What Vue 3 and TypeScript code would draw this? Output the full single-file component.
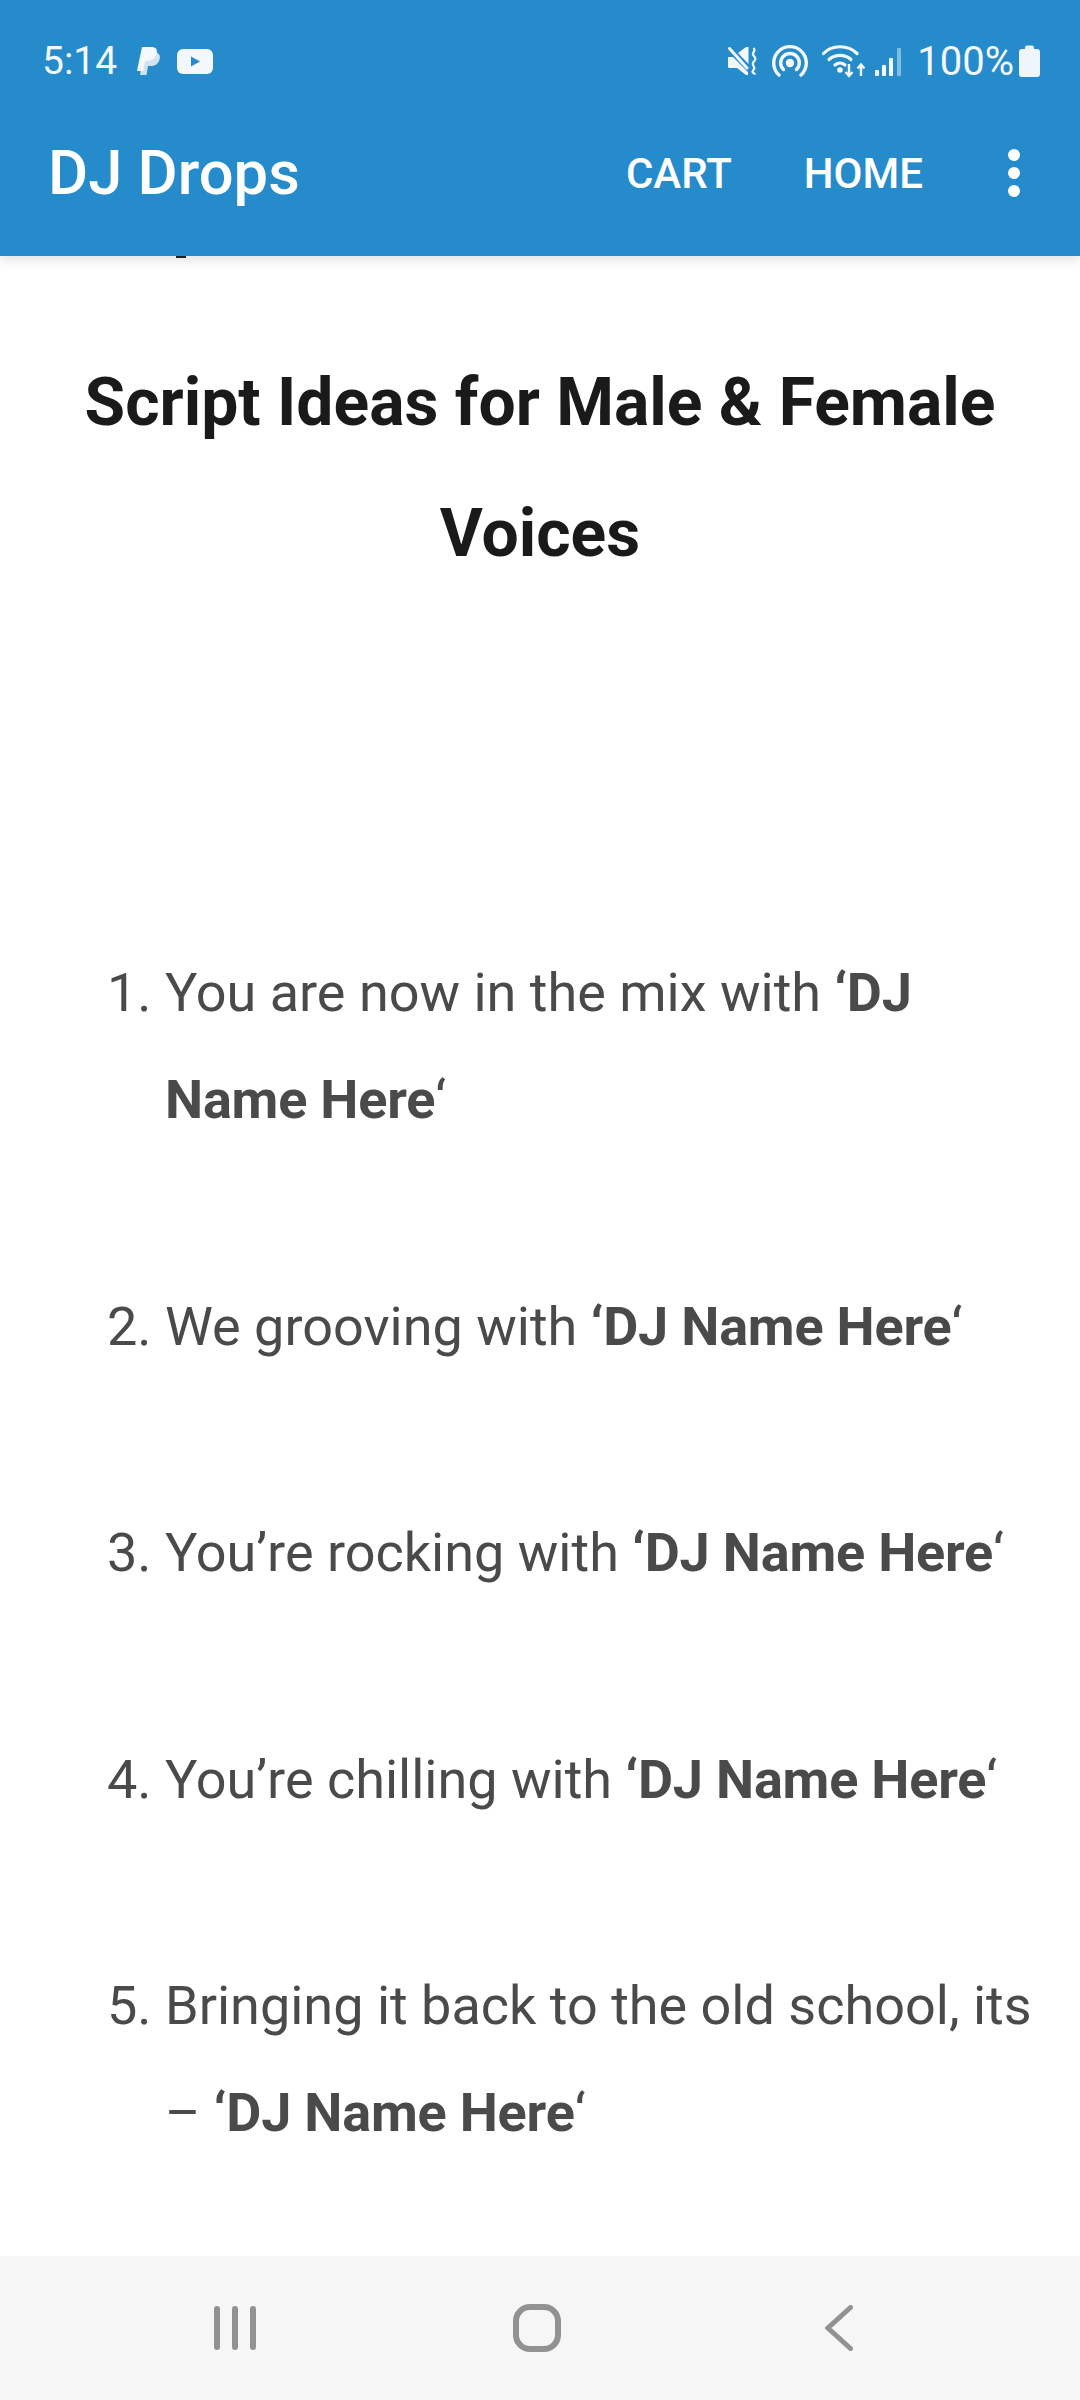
<script setup lang="ts">
const items = [
  { lead: 'You are now in the mix with ', name: 'DJ Name Here' },
  { lead: 'We grooving with ', name: 'DJ Name Here' },
  { lead: 'You’re rocking with ', name: 'DJ Name Here' },
  { lead: 'You’re chilling with ', name: 'DJ Name Here' },
  { lead: 'Bringing it back to the old school, its – ', name: 'DJ Name Here' },
]
</script>

<template>
  <div class="page">
    <header class="header">
      <div class="status">
        <div class="status-left">
          <span class="clock">5:14</span>
          <svg class="ic-pp" viewBox="0 0 23 28" width="23" height="28">
            <path d="M7 5h9c5 0 7.500 2.500 6.800 6.500-.8 5-4.500 7.500-9 7.500H11l-1.500 9H3z" fill="#cfe3f3"/>
            <path d="M5 0h9c4.500 0 6.500 2 5.800 6-.8 5-4.500 8-9.300 8H8L6.200 24H0z" fill="#f4f9fd"/>
          </svg>
          <svg class="ic-yt" viewBox="0 0 36 25" width="36" height="25">
            <rect width="36" height="25" rx="6" fill="#f2f8fc"/>
            <path d="M14 7.500l9 5-9 5z" fill="#268bca"/>
          </svg>
        </div>
        <div class="status-right">
          <svg class="ic-mute" viewBox="0 0 29 28" width="29" height="28">
            <path d="M0 10h5l15 15v3h-2L9 21H1.500A1.500 1.500 0 0 1 0 19.500z" fill="#f2f8fc"/>
            <path d="M10 6l8-6h2.500v17z" fill="#f2f8fc"/>
            <path d="M1.500 1.500L19 21" stroke="#f2f8fc" stroke-width="3" stroke-linecap="round"/>
            <path d="M25.500 1c3.500 3-2.500 4.500 0 7.500s2.800 3.500 0 6.500 3 5 0 8 1.500 3 1.500 4.500" stroke="#f2f8fc" stroke-width="2.200" fill="none"/>
          </svg>
          <svg class="ic-hot" viewBox="0 0 36 32" width="36" height="32">
            <g fill="none" stroke="#f2f8fc" stroke-width="3.400" stroke-linecap="round">
              <path d="M7 30A16.300 16.300 0 1 1 29 30"/>
              <path d="M11.500 24.500A9.300 9.300 0 1 1 24.500 24.500"/>
            </g>
            <circle cx="18" cy="18" r="4.200" fill="#f2f8fc"/>
          </svg>
          <svg class="ic-wifi" viewBox="0 0 43 33" width="43" height="33">
            <g fill="none" stroke="#f2f8fc" stroke-width="3.200" stroke-linecap="round">
              <path d="M1.500 8.500C10 -.5 26 -.5 35 8.500"/>
              <path d="M7 14.500c6-5.500 16-5.500 22 0"/>
              <path d="M13 20c3-2.500 7-2.500 10 0"/>
            </g>
            <circle cx="18" cy="25" r="2.800" fill="#f2f8fc"/>
            <path d="M27 19v12M23.500 27l3.500 4 3.500-4M39 31V20M35.500 23.500l3.500-4 3.500 4" fill="none" stroke="#f2f8fc" stroke-width="2.400"/>
          </svg>
          <svg class="ic-sig" viewBox="0 0 27 29" width="27" height="29">
            <rect x="0" y="23" width="4" height="6" rx="1" fill="#f2f8fc"/>
            <rect x="7" y="18" width="4" height="11" rx="1" fill="#f2f8fc"/>
            <rect x="14" y="11" width="4" height="18" rx="1" fill="#f2f8fc"/>
            <rect x="22" y="1" width="4" height="28" rx="1" fill="#f2f8fc" opacity=".45"/>
          </svg>
          <span class="pct">100%</span>
          <svg class="ic-bat" viewBox="0 0 21 32" width="21" height="32">
            <path d="M6 2.500a2 2 0 0 1 2-2h5a2 2 0 0 1 2 2V4h3a3 3 0 0 1 3 3v22a3 3 0 0 1-3 3H3a3 3 0 0 1-3-3V7a3 3 0 0 1 3-3h3z" fill="#eef6fb"/>
          </svg>
        </div>
      </div>
      <div class="toolbar">
        <span class="title">DJ Drops</span>
        <nav class="actions">
          <span class="action">CART</span>
          <span class="action">HOME</span>
          <span class="dots"><i></i><i></i><i></i></span>
        </nav>
      </div>
    </header>

    <main class="content">
      <span class="cut-mark"></span>
      <h2 class="heading">Script Ideas for Male &amp; Female Voices</h2>
      <ol class="list">
        <li v-for="item in items" :key="item.lead" class="item">
          {{ item.lead }}<strong>‘{{ item.name }}</strong>‘
        </li>
      </ol>
    </main>

    <footer class="navbar">
      <svg class="nav-recent" viewBox="0 0 42 44" width="42" height="44">
        <g fill="#929292">
          <rect x="0" y="0" width="6" height="44" rx="3"/>
          <rect x="18" y="0" width="6" height="44" rx="3"/>
          <rect x="36" y="0" width="6" height="44" rx="3"/>
        </g>
      </svg>
      <svg class="nav-home" viewBox="0 0 48 48" width="48" height="48">
        <rect x="3" y="3" width="42" height="42" rx="14" fill="none" stroke="#929292" stroke-width="6"/>
      </svg>
      <svg class="nav-back" viewBox="0 0 28 46" width="28" height="46">
        <path d="M25.500 2.500L3 23l22.500 20.500" fill="none" stroke="#929292" stroke-width="5" stroke-linecap="round"/>
      </svg>
    </footer>
  </div>
</template>

<style>
html, body { margin: 0; padding: 0; background: #fff; }
</style>

<style scoped>
.page {
  width: 1080px;
  height: 2400px;
  display: flex;
  flex-direction: column;
  overflow: hidden;
  font-family: Roboto, "Liberation Sans", sans-serif;
  background: #fff;
}
.header {
  height: 256px;
  flex: none;
  background: #268bca;
  color: #fff;
  box-shadow: 0 4px 12px rgba(0,0,0,.12);
  position: relative;
  z-index: 2;
}
.status {
  height: 122px;
  padding: 0 40px 0 42px;
  display: flex;
  justify-content: space-between;
  align-items: center;
  color: #f2f8fc;
}
.status-left, .status-right { display: flex; align-items: center; }
.clock { font-size: 39px; margin-right: 20px; }
.ic-pp { margin-right: 17px; }
.ic-mute { margin-right: 15px; }
.ic-hot { margin-right: 14px; }
.ic-wifi { margin-right: 10px; }
.ic-sig { margin-right: 15px; }
.pct { font-size: 40px; margin-right: 5px; }
.toolbar {
  height: 102px;
  padding: 0 60px 0 48px;
  display: flex;
  align-items: center;
  justify-content: space-between;
}
.title { font-size: 61.5px; font-weight: 500; }
.actions { display: flex; align-items: center; }
.action { font-size: 42px; font-weight: 500; margin-right: 72px; }
.action:nth-child(2) { margin-right: 85px; }
.dots { display: flex; flex-direction: column; gap: 6px; width: 12px; }
.dots i { display: block; width: 12px; height: 12px; border-radius: 50%; background: #fff; }
.content { flex: 1; position: relative; overflow: hidden; }
.cut-mark { position: absolute; left: 176px; top: 0; width: 10px; height: 2px; background: #222; }
.heading {
  margin: 0;
  padding: 81px 60px 0;
  font-size: 66px;
  line-height: 131px;
  font-weight: 700;
  text-align: center;
  color: #1a1a1a;
}
.list {
  margin: 340px 0 0;
  padding: 0 40px 0 165px;
  font-size: 54px;
  line-height: 107px;
  color: #4a4a4a;
}
.item { margin-bottom: 119.6px; }
.item strong { font-weight: 700; letter-spacing: -0.2px; }
.navbar {
  height: 144px;
  flex: none;
  background: #f6f6f6;
  display: flex;
  align-items: center;
}
.nav-recent { margin-left: 214px; }
.nav-home { margin-left: 257px; }
.nav-back { margin-left: 264px; }
</style>
